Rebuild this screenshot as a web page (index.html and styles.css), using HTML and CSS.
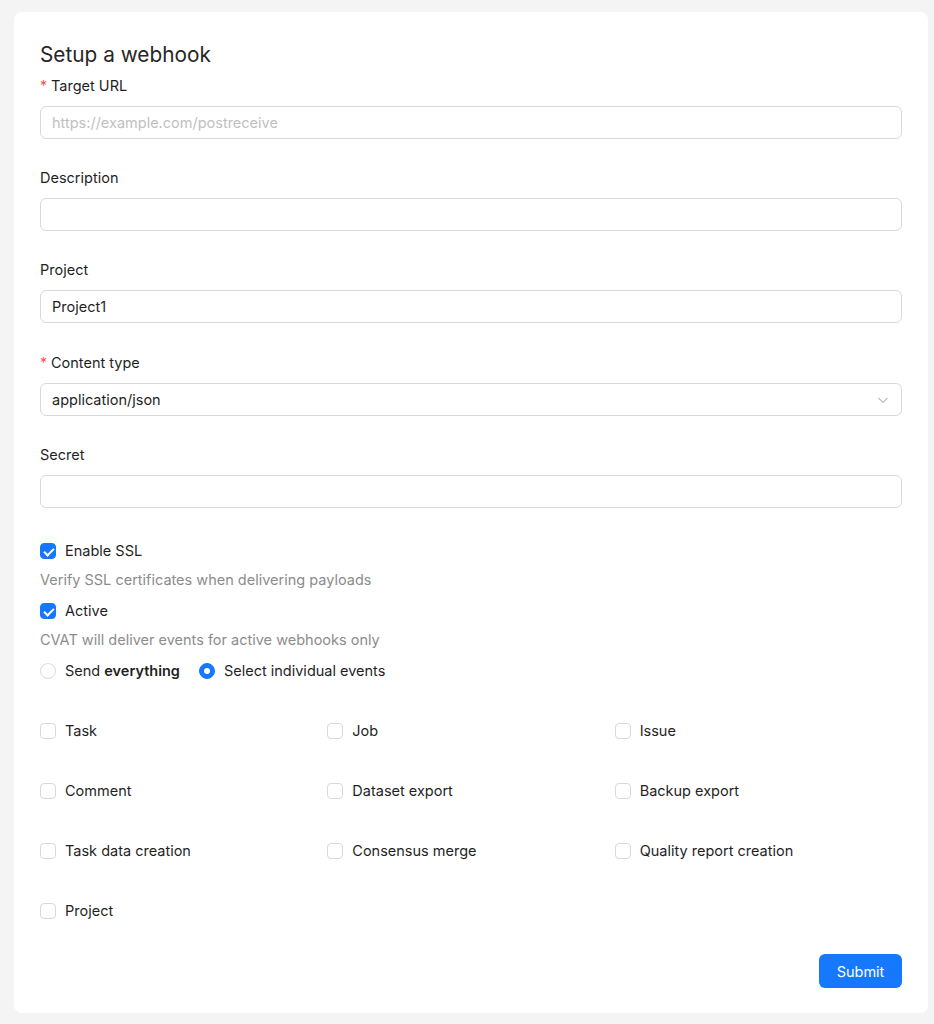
FILE: index.html
```html
<!DOCTYPE html>
<html>
<head>
    <meta charset="UTF-8">
    <title>Setup a webhook</title>
    <link rel="stylesheet" href="styles.css">
</head>
<body>
    <div class="card">
        <h1 class="title">Setup a webhook</h1>
        <form class="webhookForm">
            <div class="field">
                <label class="fieldLabel"><span class="required">*</span>Target URL</label>
                <input type="text" class="textInput" placeholder="https://example.com/postreceive" />
            </div>
            <div class="field">
                <label class="fieldLabel">Description</label>
                <input type="text" class="textInput" />
            </div>
            <div class="field">
                <label class="fieldLabel">Project</label>
                <input type="text" class="textInput" value="Project1" />
            </div>
            <div class="field">
                <label class="fieldLabel"><span class="required">*</span>Content type</label>
                <div class="select">
                    <span>application/json</span>
                    <svg class="selectArrow" width="12" height="12" viewBox="0 0 12 12">
                        <path d="M1.5 4 L6 8.5 L10.5 4" fill="none" stroke="#bfbfbf" stroke-width="1.2" />
                    </svg>
                </div>
            </div>
            <div class="field">
                <label class="fieldLabel">Secret</label>
                <input type="text" class="textInput" />
            </div>

            <div class="options">
                <label class="check"><span class="box checked"></span>Enable SSL</label>
                <p class="help">Verify SSL certificates when delivering payloads</p>
                <label class="check"><span class="box checked"></span>Active</label>
                <p class="help">CVAT will deliver events for active webhooks only</p>
                <div class="radioGroup">
                    <label class="check"><span class="radio"></span>Send&nbsp;<b>everything</b></label>
                    <label class="check"><span class="radio selected"></span>Select individual events</label>
                </div>
            </div>

            <div class="events">
                <label class="check"><span class="box"></span>Task</label>
                <label class="check"><span class="box"></span>Job</label>
                <label class="check"><span class="box"></span>Issue</label>
                <label class="check"><span class="box"></span>Comment</label>
                <label class="check"><span class="box"></span>Dataset export</label>
                <label class="check"><span class="box"></span>Backup export</label>
                <label class="check"><span class="box"></span>Task data creation</label>
                <label class="check"><span class="box"></span>Consensus merge</label>
                <label class="check"><span class="box"></span>Quality report creation</label>
                <label class="check"><span class="box"></span>Project</label>
            </div>

            <div class="actions">
                <button type="button" class="submit">Submit</button>
            </div>
        </form>
    </div>
</body>
</html>
```

FILE: styles.css
```css
body {
    margin: 0;
    padding: 12px 6px 11px 14px;
    background-color: #f4f4f4;
    font-family: Inter, "Liberation Sans", sans-serif;
    font-size: 14.5px;
    color: #1f1f1f;
}
.card {
    background-color: white;
    border-radius: 8px;
    padding: 28px 26px 25px 26px;
}
.title {
    margin: 0 0 5px 0;
    font-size: 20.8px;
    font-weight: 400;
    line-height: 30px;
    color: #262626;
}
.field {
    display: flex;
    flex-direction: column;
    margin-bottom: 28px;
}
.field:nth-child(3) {
    margin-bottom: 29px;
}
.fieldLabel {
    line-height: 22px;
    margin-bottom: 9px;
}
.required {
    color: #ff4d4f;
    margin-right: 4px;
    font-size: 14px;
}
.textInput, .select {
    box-sizing: border-box;
    height: 33px;
    width: 100%;
    border: 1px solid #d9d9d9;
    border-radius: 6px;
    padding: 0 11px;
    font-family: inherit;
    font-size: 14.5px;
    color: #1f1f1f;
    outline: none;
}
.textInput::placeholder {
    color: #bfbfbf;
}
.select {
    display: flex;
    align-items: center;
    justify-content: space-between;
    padding-right: 12px;
}
.options {
    padding-top: 4px;
}
.check {
    display: flex;
    align-items: center;
    line-height: 22px;
    white-space: nowrap;
}
.check b {
    font-weight: 600;
}
.box, .radio {
    box-sizing: border-box;
    width: 16px;
    height: 16px;
    border: 1px solid #d9d9d9;
    margin-right: 9px;
    flex-shrink: 0;
    background-color: white;
}
.box {
    border-radius: 4px;
}
.box.checked {
    background-color: #1677ff;
    border-color: #1677ff;
    position: relative;
}
.box.checked::after {
    content: "";
    position: absolute;
    left: 4.5px;
    top: 1.5px;
    width: 4px;
    height: 8px;
    border: solid white;
    border-width: 0 2px 2px 0;
    transform: rotate(45deg);
}
.radio {
    border-radius: 50%;
}
.radio.selected {
    background-color: #1677ff;
    border-color: #1677ff;
    position: relative;
}
.radio.selected::after {
    content: "";
    position: absolute;
    left: 4px;
    top: 4px;
    width: 6px;
    height: 6px;
    border-radius: 50%;
    background-color: white;
}
.help {
    margin: 7px 0 9px 0;
    line-height: 22px;
    color: #8c8c8c;
}
.radioGroup {
    display: flex;
    gap: 19px;
}
.events {
    display: grid;
    grid-template-columns: repeat(3, 1fr);
    row-gap: 38px;
    margin-top: 38px;
}
.actions {
    display: flex;
    justify-content: flex-end;
    margin-top: 32px;
}
.submit {
    height: 34px;
    width: 83px;
    background-color: #1677ff;
    color: white;
    border: none;
    border-radius: 6px;
    font-family: inherit;
    font-size: 14.5px;
}
```
